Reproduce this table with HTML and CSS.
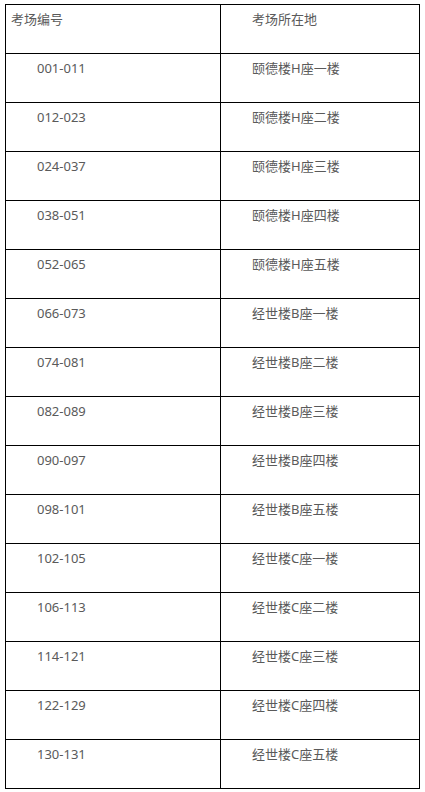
FILE: index.html
```html
<!DOCTYPE html>
<html lang="zh-CN">
<head>
<meta charset="utf-8">
<link rel="stylesheet" href="styles.css">
</head>
<body>
<table class="exam-table">
  <tr><td class="c1 head">考场编号</td><td class="c2">考场所在地</td></tr>
  <tr><td class="c1">001-011</td><td class="c2">颐德楼H座一楼</td></tr>
  <tr><td class="c1">012-023</td><td class="c2">颐德楼H座二楼</td></tr>
  <tr><td class="c1">024-037</td><td class="c2">颐德楼H座三楼</td></tr>
  <tr><td class="c1">038-051</td><td class="c2">颐德楼H座四楼</td></tr>
  <tr><td class="c1">052-065</td><td class="c2">颐德楼H座五楼</td></tr>
  <tr><td class="c1">066-073</td><td class="c2">经世楼B座一楼</td></tr>
  <tr><td class="c1">074-081</td><td class="c2">经世楼B座二楼</td></tr>
  <tr><td class="c1">082-089</td><td class="c2">经世楼B座三楼</td></tr>
  <tr><td class="c1">090-097</td><td class="c2">经世楼B座四楼</td></tr>
  <tr><td class="c1">098-101</td><td class="c2">经世楼B座五楼</td></tr>
  <tr><td class="c1">102-105</td><td class="c2">经世楼C座一楼</td></tr>
  <tr><td class="c1">106-113</td><td class="c2">经世楼C座二楼</td></tr>
  <tr><td class="c1">114-121</td><td class="c2">经世楼C座三楼</td></tr>
  <tr><td class="c1">122-129</td><td class="c2">经世楼C座四楼</td></tr>
  <tr><td class="c1">130-131</td><td class="c2">经世楼C座五楼</td></tr>
</table>
</body>
</html>
```
FILE: styles.css
```css
html, body {
  margin: 0;
  padding: 0;
  background: #fff;
}
body {
  padding: 4px 5px;
  font-family: "Noto Sans", "Noto Sans CJK SC", sans-serif;
  font-size: 13px;
  color: #5a5a5a;
}
.exam-table {
  border-collapse: collapse;
  width: 415px;
  table-layout: fixed;
}
.exam-table td {
  border: 1px solid #000;
  height: 49px;
  box-sizing: border-box;
  vertical-align: top;
  line-height: 20px;
  padding: 4px 0 0 0;
  white-space: nowrap;
}
.c1 {
  width: 215px;
  padding-left: 31px !important;
}
.c1.head {
  padding-left: 5px !important;
}
.c2 {
  padding-left: 31px !important;
}
```
